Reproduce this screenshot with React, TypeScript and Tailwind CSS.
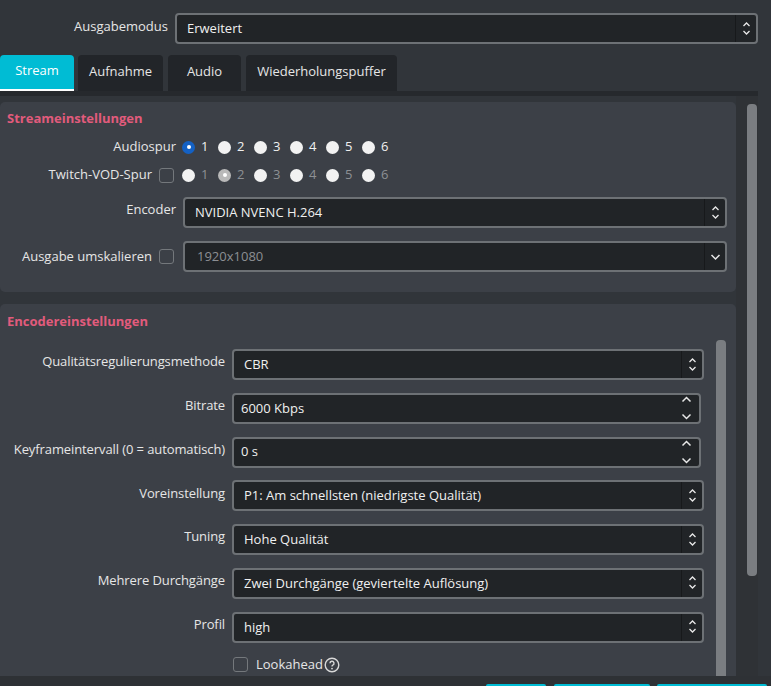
import React from 'react';

const UpDown = ({ big = false }: { big?: boolean }) => (
  <svg width={big ? 11 : 9} height={big ? 26 : 16} viewBox={big ? '0 0 11 26' : '0 0 9 16'} fill="none" stroke="#e8e8e8" strokeWidth={big ? 1.5 : 1.3}>
    {big ? (
      <>
        <path d="M1.5 6.5 L5.5 2.5 L9.5 6.5" />
        <path d="M1.5 19.5 L5.5 23.5 L9.5 19.5" />
      </>
    ) : (
      <>
        <path d="M1.5 5 L4.5 2 L7.5 5" />
        <path d="M1.5 10 L4.5 13 L7.5 10" />
      </>
    )}
  </svg>
);

const Down = () => (
  <svg width="11" height="8" viewBox="0 0 11 8" fill="none" stroke="#e8e8e8" strokeWidth="1.5">
    <path d="M1.5 2 L5.5 6 L9.5 2" />
  </svg>
);

const Select = ({
  value,
  className = '',
  muted = false,
  dropOnly = false,
  pad = 'pl-[10px]',
}: {
  value: string;
  className?: string;
  muted?: boolean;
  dropOnly?: boolean;
  pad?: string;
}) => (
  <div className={`flex h-[31px] items-stretch rounded-[4px] border-2 border-[#6d7175] bg-[#212427] ${className}`}>
    <div className={`flex flex-1 items-center ${pad} ${muted ? 'text-[#8c8f93]' : 'text-[#f0f0f0]'}`}>{value}</div>
    <div className="flex w-[21px] items-center justify-center border-l border-[#17191b]">
      {dropOnly ? <Down /> : <UpDown />}
    </div>
  </div>
);

const SpinBox = ({ value, className = '' }: { value: string; className?: string }) => (
  <div className={`flex h-[31px] items-center rounded-[4px] border-2 border-[#6d7175] bg-[#212427] ${className}`}>
    <div className="flex-1 pl-[7px] text-[#f0f0f0]">{value}</div>
    <div className="flex w-[22px] items-center justify-center pr-[3px]">
      <UpDown big />
    </div>
  </div>
);

const Radio = ({ state }: { state: 'on' | 'off' | 'grey' }) => {
  if (state === 'on')
    return (
      <span className="flex h-[13px] w-[13px] items-center justify-center rounded-full bg-[#1461c4]">
        <span className="h-[4px] w-[4px] rounded-full bg-white" />
      </span>
    );
  if (state === 'grey')
    return (
      <span className="flex h-[13px] w-[13px] items-center justify-center rounded-full bg-[#b9b9b9]">
        <span className="h-[4px] w-[4px] rounded-full bg-white" />
      </span>
    );
  return <span className="h-[13px] w-[13px] rounded-full bg-[#f2f2f2]" />;
};

const Check = () => <span className="h-[15px] w-[15px] rounded-[3px] border-[1.5px] border-[#74787c]" />;

const Tracks = ({ checked, muted }: { checked: number; muted?: boolean }) => (
  <div className="flex items-center">
    {[1, 2, 3, 4, 5, 6].map((n) => (
      <div key={n} className="flex w-[36px] items-center gap-[6px]">
        <Radio state={n === checked ? (muted ? 'grey' : 'on') : 'off'} />
        <span className={muted ? 'text-[#8d9094]' : 'text-[#f0f0f0]'}>{n}</span>
      </div>
    ))}
  </div>
);

const EncRow = ({ label, children }: { label: string; children: React.ReactNode }) => (
  <div className="flex items-center">
    <div className="w-[225px] pb-[5px] text-right tracking-[-0.1px]">{label}</div>
    <div className="ml-[7px]">{children}</div>
  </div>
);

export default function App() {
  return (
    <div
      className="h-[686px] w-[771px] overflow-hidden bg-[#31353a] text-[13px] text-[#e6e6e6]"
      style={{ fontFamily: '"Open Sans", "Noto Sans", sans-serif' }}
    >
      <div className="w-[758px]">
        {/* Ausgabemodus */}
        <div className="flex items-center pt-[13px]">
          <div className="w-[168px] pb-[4px] text-right">Ausgabemodus</div>
          <Select value="Erweitert" className="ml-[7px] h-[30px] flex-1" />
        </div>

        {/* Tabs */}
        <div className="mt-[11px] flex h-[36px] gap-[4px]">
          <div className="flex w-[74px] flex-col rounded-t-[4px] bg-[#00bcd4]">
            <div className="flex flex-1 items-center justify-center pb-[2px] text-white">Stream</div>
            <div className="h-[2px] bg-white" />
          </div>
          <div className="flex w-[85px] items-center justify-center rounded-t-[4px] bg-[#222529] pb-[2px]">Aufnahme</div>
          <div className="ml-[1px] flex w-[73px] items-center justify-center rounded-t-[4px] bg-[#222529] pb-[2px]">Audio</div>
          <div className="ml-[1px] flex w-[151px] items-center justify-center rounded-t-[4px] bg-[#222529] pb-[2px]">Wiederholungspuffer</div>
        </div>
        <div className="h-[5px] bg-[#26292d]" />

        {/* Content */}
        <div className="flex h-[580px] overflow-hidden">
          <div className="w-[736px] pt-[6px]">
            {/* Streameinstellungen */}
            <div className="h-[190px] rounded-[5px] bg-[#3c4047] pt-[7px]">
              <div className="h-[18px] pl-[7px] font-bold leading-[18px] text-[#e25b7c]">Streameinstellungen</div>
              <div className="mt-[8px] flex h-[24px] items-center">
                <div className="w-[176px] text-right">Audiospur</div>
                <div className="ml-[6px]">
                  <Tracks checked={1} />
                </div>
              </div>
              <div className="mt-[4px] flex h-[24px] items-center">
                <div className="flex w-[176px] items-center justify-end gap-[7px] pr-[2px]">
                  <span>Twitch-VOD-Spur</span>
                  <Check />
                </div>
                <div className="ml-[6px]">
                  <Tracks checked={2} muted />
                </div>
              </div>
              <div className="mt-[10px] flex items-center">
                <div className="w-[176px] pb-[5px] text-right">Encoder</div>
                <Select value="NVIDIA NVENC H.264" className="ml-[7px] h-[31px] w-[544px]" />
              </div>
              <div className="mt-[13px] flex items-center">
                <div className="flex w-[176px] items-center justify-end gap-[7px] pr-[2px]">
                  <span>Ausgabe umskalieren</span>
                  <Check />
                </div>
                <Select value="1920x1080" muted dropOnly className="ml-[7px] h-[31px] w-[544px]" pad="pl-[12px]" />
              </div>
            </div>

            {/* Encodereinstellungen */}
            <div className="mt-[12px] flex h-[400px] rounded-[5px] bg-[#3c4047]">
              <div className="w-[716px] pt-[8px]">
                <div className="h-[18px] pl-[7px] font-bold leading-[18px] text-[#e25b7c]">Encodereinstellungen</div>
                <div className="mt-[19px] flex flex-col gap-[12.8px]">
                  <EncRow label="Qualitätsregulierungsmethode">
                    <Select value="CBR" className="w-[472px]" pad="pl-[10px]" />
                  </EncRow>
                  <EncRow label="Bitrate">
                    <SpinBox value="6000 Kbps" className="w-[469px]" />
                  </EncRow>
                  <EncRow label="Keyframeintervall (0 = automatisch)">
                    <SpinBox value="0 s" className="w-[469px]" />
                  </EncRow>
                  <EncRow label="Voreinstellung">
                    <Select value="P1: Am schnellsten (niedrigste Qualität)" className="w-[472px]" />
                  </EncRow>
                  <EncRow label="Tuning">
                    <Select value="Hohe Qualität" className="w-[472px]" />
                  </EncRow>
                  <EncRow label="Mehrere Durchgänge">
                    <Select value="Zwei Durchgänge (geviertelte Auflösung)" className="w-[472px]" />
                  </EncRow>
                  <EncRow label="Profil">
                    <Select value="high" className="w-[472px]" />
                  </EncRow>
                </div>
                <div className="ml-[233px] mt-[12px] flex items-center gap-[8px]">
                  <Check />
                  <span className="flex items-center">
                    Lookahead
                    <svg width="16" height="16" viewBox="0 0 16 16" className="ml-[1px]">
                      <circle cx="8" cy="8" r="6.8" fill="none" stroke="#d8d8d8" strokeWidth="1.4" />
                      <path d="M6 6.3 A2 2 0 1 1 8.8 8.1 C8.2 8.4 8 8.8 8 9.6" fill="none" stroke="#d8d8d8" strokeWidth="1.4" />
                      <circle cx="8" cy="11.6" r="0.9" fill="#d8d8d8" />
                    </svg>
                  </span>
                </div>
              </div>
              <div className="mt-[36px] h-[400px] w-[10px] rounded-t-[4px] bg-[#7a7d81]" />
            </div>
          </div>
          <div className="w-[11px] bg-[#2f3236]" />
          <div className="w-[11px] bg-[#2f3236] pt-[8px]">
            <div className="h-[472px] w-[10px] rounded-[4px] bg-[#7a7d81]" />
          </div>
        </div>
      </div>

      {/* Bottom buttons */}
      <div className="flex h-[11px] items-end bg-[#2e3135]">
        <div className="ml-[486px] h-[3px] w-[60px] rounded-t-[2px] bg-[#00bcd4]" />
        <div className="ml-[8px] h-[3px] w-[96px] rounded-t-[2px] bg-[#00bcd4]" />
        <div className="ml-[7px] h-[3px] w-[110px] rounded-t-[2px] bg-[#00bcd4]" />
      </div>
    </div>
  );
}
